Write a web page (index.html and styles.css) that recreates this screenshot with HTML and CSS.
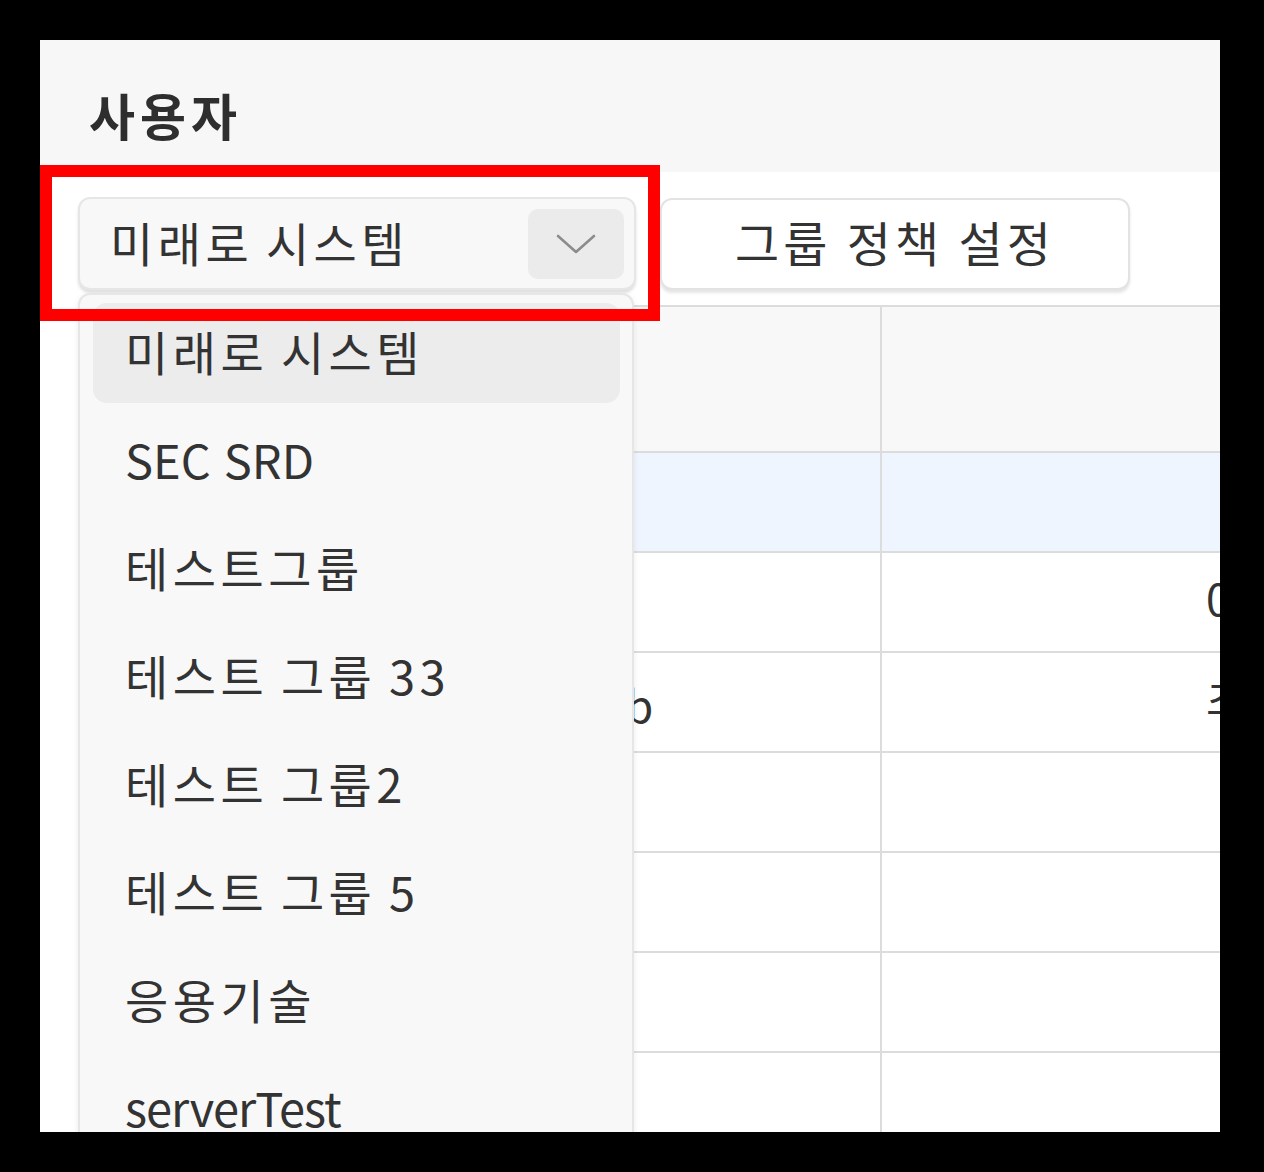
FILE: index.html
```html
<!DOCTYPE html>
<html lang="ko">
<head>
<meta charset="utf-8">
<title>사용자</title>
<link rel="stylesheet" href="styles.css">
</head>
<body>
<div class="panel">
  <header class="header">
    <h1 class="title">사용자</h1>
  </header>
  <main class="main">
    <div class="toolbar">
      <div class="select">
        <span class="select-text">미래로 시스템</span>
        <span class="select-arrow">
          <svg width="44" height="26" viewBox="0 0 44 26"><polyline points="4,5 22,21 40,5" fill="none" stroke="#8c8c8c" stroke-width="2.6" stroke-linecap="round" stroke-linejoin="round"/></svg>
        </span>
      </div>
      <button class="btn">그룹 정책 설정</button>
    </div>
    <div class="table">
      <div class="row head"><div class="cell"></div><div class="cell"></div><div class="cell"></div></div>
      <div class="row sel"><div class="cell"></div><div class="cell"></div><div class="cell"></div></div>
      <div class="row"><div class="cell"></div><div class="cell"></div><div class="cell c3">0</div></div>
      <div class="row"><div class="cell"></div><div class="cell c2">b</div><div class="cell c3">초</div></div>
      <div class="row"><div class="cell"></div><div class="cell"></div><div class="cell"></div></div>
      <div class="row"><div class="cell"></div><div class="cell"></div><div class="cell"></div></div>
      <div class="row"><div class="cell"></div><div class="cell"></div><div class="cell"></div></div>
      <div class="row"><div class="cell"></div><div class="cell"></div><div class="cell"></div></div>
    </div>
  </main>
  <ul class="dropdown">
    <li class="item active">미래로 시스템</li>
    <li class="item latin">SEC SRD</li>
    <li class="item">테스트그룹</li>
    <li class="item">테스트 그룹 33</li>
    <li class="item">테스트 그룹2</li>
    <li class="item">테스트 그룹 5</li>
    <li class="item">응용기술</li>
    <li class="item latin tight">serverTest</li>
  </ul>
  <div class="mark"></div>
</div>
</body>
</html>
```
FILE: styles.css
```css
* { box-sizing: border-box; }
html, body { margin: 0; padding: 0; background: #000; }
body {
  font-family: "Noto Sans CJK KR", "Noto Sans", sans-serif;
  color: #333;
}
.panel {
  position: relative;
  margin: 40px;
  width: 1180px;
  height: 1092px;
  overflow: hidden;
  background: #fff;
  display: flex;
  flex-direction: column;
}
.header {
  height: 132px;
  flex: none;
  background: #f7f7f7;
  padding: 44px 0 0 49px;
}
.title {
  margin: 0;
  font-size: 50px;
  line-height: 60px;
  font-weight: 700;
  color: #2e2e2e;
  letter-spacing: 5px;
}
.main {
  flex: 1;
  background: #fff;
}
.toolbar {
  display: flex;
  align-items: flex-start;
  gap: 24px;
  padding: 25px 0 0 38px;
  height: 133px;
}
.select {
  width: 558px;
  height: 93px;
  background: #f8f8f8;
  border: 2px solid #e6e6e6;
  border-radius: 12px;
  box-shadow: 0 3px 3px rgba(0,0,0,0.12);
  display: flex;
  align-items: center;
  justify-content: space-between;
  padding: 0 10px 0 30px;
}
.select-text {
  font-size: 47px;
  line-height: 60px;
  color: #333;
  letter-spacing: 4.5px;
  word-spacing: -5px;
  margin-top: -4px;
}
.select-arrow {
  width: 96px;
  height: 70px;
  border-radius: 10px;
  background: #ebebeb;
  display: flex;
  align-items: center;
  justify-content: center;
}
.btn {
  width: 470px;
  height: 92px;
  margin-top: 1px;
  background: #fff;
  border: 2px solid #e3e3e3;
  border-radius: 12px;
  box-shadow: 0 3px 3px rgba(0,0,0,0.1);
  font-family: inherit;
  font-size: 48px;
  line-height: 60px;
  color: #333;
  letter-spacing: 4px;
  word-spacing: -2px;
  padding: 0 0 6px;
}
.table {
  margin-left: 38px;
  width: 1400px;
  border-top: 2px solid #dcdcdc;
}
.row {
  display: grid;
  grid-template-columns: 556px 248px 1fr;
  height: 100px;
  border-bottom: 2px solid #dcdcdc;
}
.row.head {
  height: 146px;
  background: #f8f8f8;
}
.row.sel { background: #eef5fe; }
.cell {
  border-right: 2px solid #dcdcdc;
  display: flex;
  align-items: center;
  font-size: 44px;
  color: #333;
  overflow: hidden;
  white-space: nowrap;
}
.cell.c2 { text-indent: -8px; padding-top: 4px; }
.cell.c3 { padding-left: 324px; padding-bottom: 10px; }
.dropdown {
  position: absolute;
  left: 38px;
  top: 253px;
  width: 556px;
  height: 900px;
  margin: 0;
  list-style: none;
  padding: 8px 12px 8px 13px;
  background: #f8f8f8;
  border: 2px solid #e6e6e6;
  border-radius: 12px 12px 0 0;
  box-shadow: 0 2px 6px rgba(0,0,0,0.08);
  display: flex;
  flex-direction: column;
  gap: 8px;
}
.item {
  flex: none;
  height: 100px;
  border-radius: 14px;
  padding: 0 0 4px 32px;
  display: flex;
  align-items: center;
  font-size: 47px;
  line-height: 60px;
  color: #333;
  letter-spacing: 4.5px;
  word-spacing: -5px;
}
.item.latin { letter-spacing: 0; word-spacing: 0; }
.item.tight { letter-spacing: -1px; }
.item.active { background: #ececec; }
.mark {
  position: absolute;
  left: 0;
  top: 125px;
  width: 620px;
  height: 156px;
  border: 12px solid #ff0000;
}
```
